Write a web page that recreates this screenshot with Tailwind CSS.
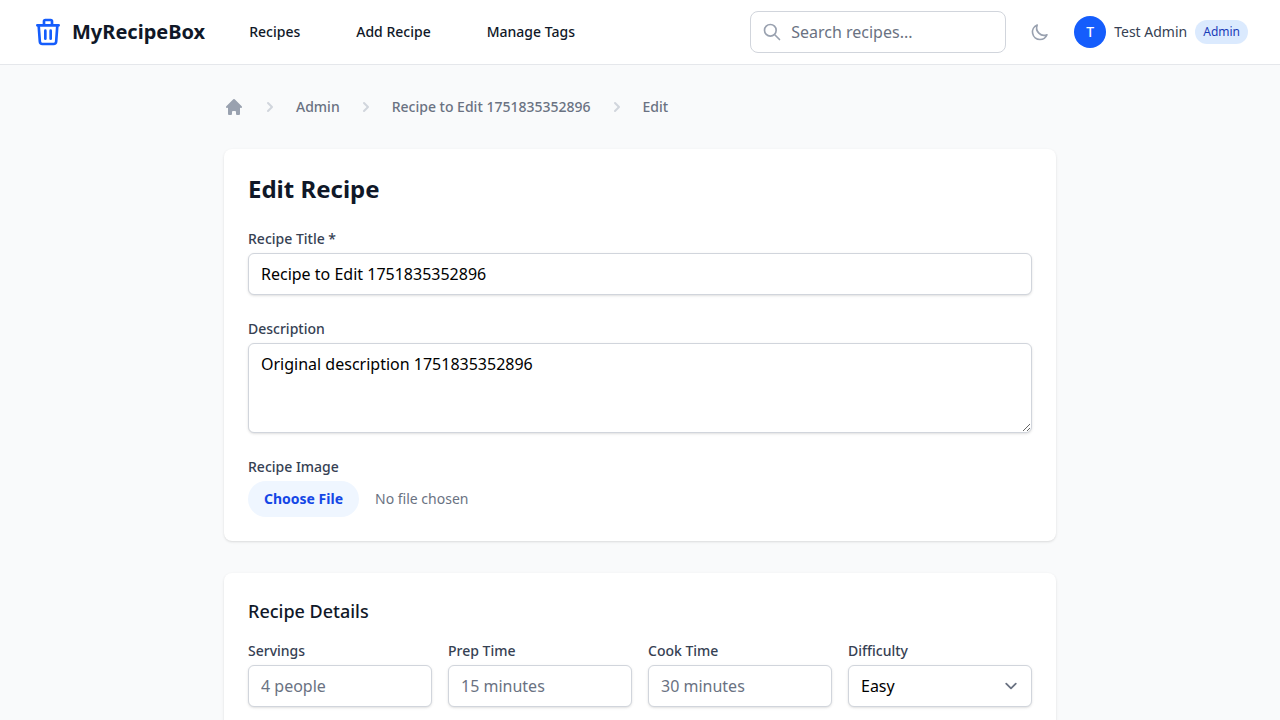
<!DOCTYPE html>
<html lang="en">
<head>
<meta charset="utf-8">
<title>MyRecipeBox</title>
<script src="https://cdn.jsdelivr.net/npm/@tailwindcss/browser@4"></script>
</head>
<body class="h-screen overflow-hidden bg-gray-50 font-['Noto_Sans',sans-serif] text-black">
<header class="border-b border-gray-200 bg-white">
  <div class="mx-auto flex h-16 max-w-7xl items-center justify-between px-8">
    <div class="flex items-center">
      <a class="flex items-center gap-2">
        <svg class="size-8 text-blue-600" fill="none" stroke="currentColor" stroke-width="2" stroke-linecap="round" stroke-linejoin="round" viewBox="0 0 24 24"><path d="M19 7l-.867 12.142A2 2 0 0116.138 21H7.862a2 2 0 01-1.995-1.858L5 7m5 4v6m4-6v6m1-10V4a1 1 0 00-1-1h-4a1 1 0 00-1 1v3M4 7h16"/></svg>
        <span class="text-xl font-bold text-gray-900">MyRecipeBox</span>
      </a>
      <nav class="ml-8 flex gap-8 text-sm font-medium text-gray-900">
        <a class="px-3 py-2">Recipes</a>
        <a class="px-3 py-2">Add Recipe</a>
        <a class="px-3 py-2">Manage Tags</a>
      </nav>
    </div>
    <div class="flex items-center gap-4">
      <div class="relative w-64">
        <svg class="absolute left-3 top-1/2 size-5 -translate-y-1/2 text-gray-400" fill="none" stroke="currentColor" stroke-width="2" stroke-linecap="round" stroke-linejoin="round" viewBox="0 0 24 24"><path d="M21 21l-6-6m2-5a7 7 0 11-14 0 7 7 0 0114 0z"/></svg>
        <input type="text" placeholder="Search recipes..." class="block w-full rounded-lg border border-gray-300 py-2 pl-10 pr-4 text-base placeholder:text-gray-500">
      </div>
      <button class="p-2 text-gray-400" aria-label="Toggle dark mode">
        <svg class="size-5" fill="none" stroke="currentColor" stroke-width="2" stroke-linecap="round" stroke-linejoin="round" viewBox="0 0 24 24"><path d="M20.354 15.354A9 9 0 018.646 3.646 9.003 9.003 0 0012 21a9.003 9.003 0 008.354-5.646z"/></svg>
      </button>
      <div class="flex items-center gap-2">
        <span class="flex size-8 items-center justify-center rounded-full bg-blue-600 text-sm font-medium text-white">T</span>
        <span class="text-sm text-gray-700">Test Admin</span>
        <span class="rounded-full bg-blue-100 px-2 py-1 text-xs text-blue-800">Admin</span>
      </div>
    </div>
  </div>
</header>
<main class="mx-auto w-[832px] py-8">
  <nav class="mb-8 flex items-center gap-4 text-sm font-medium text-gray-500">
    <svg class="size-5 text-gray-400" fill="currentColor" viewBox="0 0 20 20"><path d="M10.707 2.293a1 1 0 00-1.414 0l-7 7a1 1 0 001.414 1.414L4 10.414V17a1 1 0 001 1h2a1 1 0 001-1v-2a1 1 0 011-1h2a1 1 0 011 1v2a1 1 0 001 1h2a1 1 0 001-1v-6.586l.293.293a1 1 0 001.414-1.414l-7-7z"/></svg>
    <svg class="size-5 text-gray-300" fill="currentColor" viewBox="0 0 20 20"><path fill-rule="evenodd" d="M7.293 14.707a1 1 0 010-1.414L10.586 10 7.293 6.707a1 1 0 011.414-1.414l4 4a1 1 0 010 1.414l-4 4a1 1 0 01-1.414 0z"/></svg>
    <a>Admin</a>
    <svg class="size-5 text-gray-300" fill="currentColor" viewBox="0 0 20 20"><path fill-rule="evenodd" d="M7.293 14.707a1 1 0 010-1.414L10.586 10 7.293 6.707a1 1 0 011.414-1.414l4 4a1 1 0 010 1.414l-4 4a1 1 0 01-1.414 0z"/></svg>
    <a>Recipe to Edit 1751835352896</a>
    <svg class="size-5 text-gray-300" fill="currentColor" viewBox="0 0 20 20"><path fill-rule="evenodd" d="M7.293 14.707a1 1 0 010-1.414L10.586 10 7.293 6.707a1 1 0 011.414-1.414l4 4a1 1 0 010 1.414l-4 4a1 1 0 01-1.414 0z"/></svg>
    <span>Edit</span>
  </nav>
  <form class="space-y-8">
    <section class="rounded-lg bg-white p-6 shadow-sm">
      <h1 class="mb-6 text-2xl font-bold text-gray-900">Edit Recipe</h1>
      <div class="space-y-6">
        <div>
          <label class="block text-sm font-medium text-gray-700">Recipe Title *</label>
          <input type="text" value="Recipe to Edit 1751835352896" class="mt-1 block w-full rounded-md border border-gray-300 bg-white px-3 py-2 text-base shadow-sm">
        </div>
        <div>
          <label class="block text-sm font-medium text-gray-700">Description</label>
          <textarea rows="3" class="mt-1 block w-full rounded-md border border-gray-300 bg-white px-3 py-2 text-base shadow-sm">Original description 1751835352896</textarea>
        </div>
        <div>
          <label class="block text-sm font-medium text-gray-700">Recipe Image</label>
          <input type="file" class="mt-1 block w-full text-sm text-gray-500 file:mr-4 file:rounded-full file:border-0 file:bg-blue-50 file:px-4 file:py-2 file:text-sm file:font-bold file:text-blue-700">
        </div>
      </div>
    </section>
    <section class="rounded-lg bg-white p-6 shadow-sm">
      <h2 class="mb-4 text-lg font-medium text-gray-900">Recipe Details</h2>
      <div class="grid grid-cols-4 gap-4">
        <div>
          <label class="block text-sm font-medium text-gray-700">Servings</label>
          <input type="text" placeholder="4 people" class="mt-1 block w-full rounded-md border border-gray-300 bg-white px-3 py-2 text-base shadow-sm placeholder:text-gray-500">
        </div>
        <div>
          <label class="block text-sm font-medium text-gray-700">Prep Time</label>
          <input type="text" placeholder="15 minutes" class="mt-1 block w-full rounded-md border border-gray-300 bg-white px-3 py-2 text-base shadow-sm placeholder:text-gray-500">
        </div>
        <div>
          <label class="block text-sm font-medium text-gray-700">Cook Time</label>
          <input type="text" placeholder="30 minutes" class="mt-1 block w-full rounded-md border border-gray-300 bg-white px-3 py-2 text-base shadow-sm placeholder:text-gray-500">
        </div>
        <div>
          <label class="block text-sm font-medium text-gray-700">Difficulty</label>
          <div class="relative mt-1">
            <select class="block w-full appearance-none rounded-md border border-gray-300 bg-white py-2 pl-3 pr-10 text-base shadow-sm"><option>Easy</option><option>Medium</option><option>Hard</option></select>
            <svg class="pointer-events-none absolute right-[9px] top-[9px] size-6 text-gray-500" fill="none" stroke="currentColor" stroke-width="1.5" stroke-linecap="round" stroke-linejoin="round" viewBox="0 0 20 20"><path d="M6 8l4 4 4-4"/></svg>
          </div>
        </div>
      </div>
    </section>
  </form>
</main>
</body>
</html>
